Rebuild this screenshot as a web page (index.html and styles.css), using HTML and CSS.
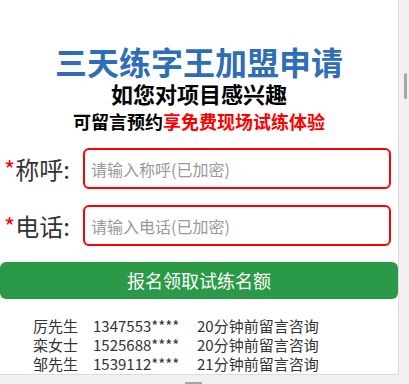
FILE: index.html
```html
<!DOCTYPE html>
<html>
<head>
  <meta charset="UTF-8">
  <title>三天练字王加盟申请</title>
  <link rel="stylesheet" href="styles.css">
</head>
<body>
  <div class="window">
    <div class="main">
      <div class="frame">
        <h1 class="title">三天练字王加盟申请</h1>
        <h2 class="subtitle">如您对项目感兴趣</h2>
        <p class="tip">可留言预约<span class="red">享免费现场试练体验</span></p>

        <div class="form-row">
          <label for="name"><span class="star">*</span>称呼:</label>
          <input type="text" id="name" placeholder="请输入称呼(已加密)">
        </div>
        <div class="form-row">
          <label for="phone"><span class="star">*</span>电话:</label>
          <input type="text" id="phone" placeholder="请输入电话(已加密)">
        </div>

        <button class="submit">报名领取试练名额</button>

        <div class="records">
          <span>厉先生</span><span>1347553****</span><span>20分钟前留言咨询</span>
          <span>栾女士</span><span>1525688****</span><span>20分钟前留言咨询</span>
          <span>邹先生</span><span>1539112****</span><span>21分钟前留言咨询</span>
        </div>
      </div>
      <div class="vscroll"><div class="vthumb"></div></div>
    </div>
    <div class="hscroll"><div class="hthumb"></div></div>
  </div>
</body>
</html>
```

FILE: styles.css
```css
body {
  margin: 0;
  background-color: #f0f0f0;
  font-family: 'Noto Sans CJK SC', 'Noto Sans', sans-serif;
  color: #333;
  overflow: hidden;
}
.window {
  width: 409px;
  height: 384px;
}
.main {
  display: flex;
  height: 375px;
}
.frame {
  width: 399px;
  height: 375px;
  box-sizing: border-box;
  background-color: #fff;
  border-right: 1px solid #dcdcdc;
  border-bottom: 1px solid #dcdcdc;
  overflow: hidden;
  padding-top: 44px;
}
.title {
  margin: 0;
  font-family: 'Liberation Sans', 'Noto Sans CJK SC', sans-serif;
  font-size: 32px;
  line-height: 40px;
  font-weight: bold;
  color: #2f6db5;
  text-align: center;
}
.subtitle {
  margin: 0;
  font-family: 'Liberation Sans', 'Noto Sans CJK SC', sans-serif;
  font-size: 22px;
  line-height: 23px;
  font-weight: bold;
  color: #000;
  text-align: center;
}
.tip {
  margin: 2px 0 0;
  font-size: 18px;
  line-height: 24px;
  font-weight: bold;
  color: #000;
  text-align: center;
}
.red {
  color: #f00;
}
.form-row {
  display: flex;
  align-items: center;
  margin-top: 16px;
}
.form-row:first-of-type {
  margin-top: 15px;
}
label {
  width: 83px;
  box-sizing: border-box;
  padding-left: 4px;
  font-size: 24px;
  line-height: 30px;
  color: #333;
}
.star {
  color: #f00;
}
input {
  width: 308px;
  height: 41px;
  box-sizing: border-box;
  border: 2px solid #f00;
  border-radius: 6px;
  padding: 0 6px;
  font-family: 'Noto Sans CJK SC', 'Noto Sans', sans-serif;
  font-size: 16px;
  outline: none;
}
input::placeholder {
  color: #999;
}
.submit {
  display: block;
  width: 398px;
  height: 37px;
  margin-top: 16px;
  border: none;
  border-radius: 6px;
  background-color: #2a9a48;
  color: #fff;
  font-family: 'Noto Sans CJK SC', 'Noto Sans', sans-serif;
  font-size: 18px;
  line-height: 37px;
  padding: 0;
}
.records {
  display: grid;
  grid-template-columns: 60px 104px auto;
  margin-top: 17px;
  padding-left: 33px;
  font-size: 15px;
  line-height: 19px;
  color: #333;
}
.vscroll {
  flex: 1;
}
.vthumb {
  width: 3px;
  height: 26px;
  margin: 73px 0 0 5px;
  border-radius: 2px;
  background-color: #a6a6a6;
}
.hscroll {
  height: 9px;
}
.hthumb {
  width: 17px;
  height: 2px;
  margin: 7px 0 0 185px;
  background-color: #a6a6a6;
}
```
